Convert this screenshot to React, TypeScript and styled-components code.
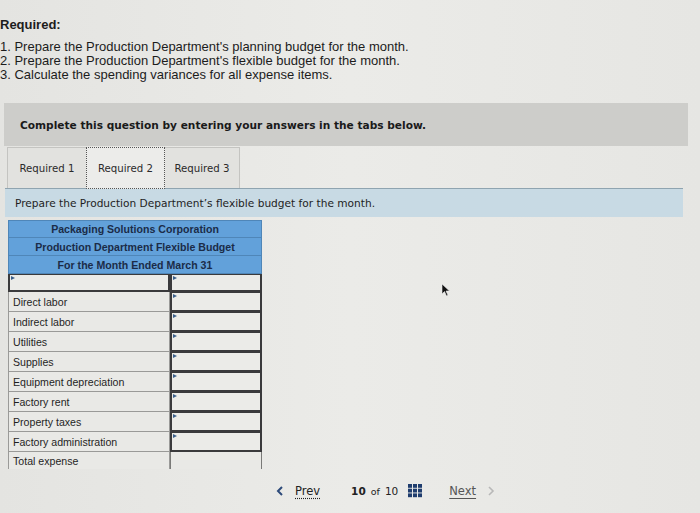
import * as React from 'react';
import styled, { createGlobalStyle } from 'styled-components';

const GlobalStyle = createGlobalStyle`
  html, body {
    margin: 0;
    padding: 0;
    background: #e7e7e4;
  }
  body {
    width: 700px;
    height: 513px;
    overflow: hidden;
    font-family: "Liberation Sans", Arial, sans-serif;
  }
`;

const Page = styled.div`
  position: relative;
  width: 700px;
  height: 513px;
  background: linear-gradient(90deg, #e4e4e1 0%, #ebebe8 50%, #e6e6e3 100%);
  padding-top: 18px;
  box-sizing: border-box;
`;

const Intro = styled.div`
  color: #1c1c1c;
  font-size: 13px;
  line-height: 14px;
`;

const IntroTitle = styled.div`
  font-weight: 700;
  margin-bottom: 8px;
`;

const Prompt = styled.div`
  margin: 21px 0 0 4px;
  width: 684px;
  height: 43px;
  background: #cdcdca;
  display: flex;
  align-items: center;
  padding-left: 16px;
  box-sizing: border-box;
  font-family: "DejaVu Sans", Verdana, sans-serif;
  font-weight: 700;
  font-size: 10.6px;
  color: #1a1a1a;
`;

const TabStrip = styled.div`
  display: flex;
  margin: 1px 0 0 7px;
  width: 233px;
  height: 41px;
  background: #e2e2df;
  border: 1px solid #c4c4c1;
  border-bottom: none;
  box-sizing: border-box;
`;

const Tab = styled.div<{ $active?: boolean; $w: number }>`
  flex: 0 0 ${p => p.$w}px;
  display: flex;
  align-items: center;
  justify-content: center;
  white-space: nowrap;
  height: ${p => (p.$active ? '42px' : '41px')};
  margin-top: ${p => (p.$active ? '-1px' : '0')};
  font-family: "DejaVu Sans", Verdana, sans-serif;
  font-size: 10.2px;
  color: #2a2a2a;
  background: ${p => (p.$active ? '#ececea' : 'transparent')};
  border: ${p => (p.$active ? '1px dotted #555' : '1px solid transparent')};
  box-sizing: border-box;
`;

const InfoBar = styled.div`
  margin-left: 5px;
  width: 678px;
  height: 29px;
  background: #c8dae4;
  border-top: 1px solid #8fa4b0;
  display: flex;
  align-items: center;
  padding-left: 10px;
  box-sizing: border-box;
  font-family: "DejaVu Sans", Verdana, sans-serif;
  font-size: 10.6px;
  color: #1e1e1e;
`;

const Table = styled.div`
  margin: 3px 0 0 8px;
  width: 254px;
`;

const HeadRow = styled.div`
  height: 18px;
  background: #62a1da;
  border: 1px solid #4f86b8;
  border-top: none;
  display: flex;
  align-items: center;
  justify-content: center;
  font-weight: 700;
  font-size: 10.6px;
  color: #1b2c48;
  box-sizing: border-box;
  &:first-child {
    border-top: 1px solid #4f86b8;
  }
`;

const Row = styled.div<{ $h?: number }>`
  display: grid;
  grid-template-columns: 162px 92px;
  height: ${p => p.$h ?? 20}px;
`;

const Label = styled.div<{ $open?: boolean }>`
  display: flex;
  align-items: center;
  padding-left: 4px;
  font-size: 10.6px;
  color: #1f1f1f;
  background: #e9e9e6;
  border: 1px solid #9a9a98;
  border-top: none;
  border-bottom: ${p => (p.$open ? 'none' : '1px solid #9a9a98')};
  box-sizing: border-box;
`;

const Input = styled.div`
  position: relative;
  background: #ebebe8;
  border: 2px solid #3a3a3c;
  border-top-width: 1px;
  box-sizing: border-box;
  &::before {
    content: '';
    position: absolute;
    left: 1px;
    top: 1px;
    border-left: 4px solid #3b5f8a;
    border-top: 2.5px solid transparent;
    border-bottom: 2.5px solid transparent;
  }
`;

const TotalCell = styled.div`
  background: #e9e9e6;
  border-left: 1px solid #7a7a78;
  border-right: 1px solid #7a7a78;
`;

const Nav = styled.div`
  display: flex;
  align-items: center;
  margin: 10px 0 0 276px;
  height: 24px;
  font-family: "DejaVu Sans", Verdana, sans-serif;
  font-size: 11.5px;
  color: #222;
`;

const NavLink = styled.span<{ $muted?: boolean }>`
  display: flex;
  align-items: center;
  gap: 11px;
  color: ${p => (p.$muted ? '#555' : '#222')};
  & u {
    text-decoration: ${p => (p.$muted ? 'underline' : 'underline dotted')};
    text-underline-offset: 3px;
  }
`;

const Count = styled.span`
  margin-left: 31px;
  font-size: 10.5px;
  & b {
    font-weight: 700;
  }
  & small {
    font-size: 9.5px;
    margin: 0 5px;
  }
`;

const GridIcon = styled.svg`
  margin: 0 26px 0 10px;
`;

const Cursor = styled.svg`
  position: absolute;
  left: 441px;
  top: 283px;
`;

const items = [
  'Direct labor',
  'Indirect labor',
  'Utilities',
  'Supplies',
  'Equipment depreciation',
  'Factory rent',
  'Property taxes',
  'Factory administration',
];

export default function App() {
  return (
    <Page>
      <GlobalStyle />
      <Intro>
        <IntroTitle>Required:</IntroTitle>
        <div>1. Prepare the Production Department's planning budget for the month.</div>
        <div>2. Prepare the Production Department's flexible budget for the month.</div>
        <div>3. Calculate the spending variances for all expense items.</div>
      </Intro>

      <Prompt>Complete this question by entering your answers in the tabs below.</Prompt>

      <TabStrip>
        <Tab $w={78}>Required 1</Tab>
        <Tab $w={79} $active>Required 2</Tab>
        <Tab $w={74}>Required 3</Tab>
      </TabStrip>

      <InfoBar>Prepare the Production Department’s flexible budget for the month.</InfoBar>

      <Table>
        <HeadRow>Packaging Solutions Corporation</HeadRow>
        <HeadRow>Production Department Flexible Budget</HeadRow>
        <HeadRow>For the Month Ended March 31</HeadRow>
        <Row $h={18}>
          <Input />
          <Input />
        </Row>
        {items.map(item => (
          <Row key={item}>
            <Label>{item}</Label>
            <Input />
          </Row>
        ))}
        <Row $h={17}>
          <Label $open>Total expense</Label>
          <TotalCell />
        </Row>
      </Table>

      <Nav>
        <NavLink>
          <svg width="8" height="10" viewBox="0 0 8 10">
            <path d="M6 1 L2 5 L6 9" fill="none" stroke="#2d4a7a" strokeWidth="2" />
          </svg>
          <u>Prev</u>
        </NavLink>
        <Count>
          <b>10</b><small>of</small>10
        </Count>
        <GridIcon width="15" height="14" viewBox="0 0 15 14">
          {[0, 1, 2].map(r =>
            [0, 1, 2].map(c => (
              <rect key={`${r}${c}`} x={c * 5} y={r * 4.7} width="4" height="3.8" fill="#1f3d6e" />
            ))
          )}
        </GridIcon>
        <NavLink $muted>
          <u>Next</u>
          <svg width="8" height="10" viewBox="0 0 8 10">
            <path d="M2 1 L6 5 L2 9" fill="none" stroke="#b8b8b8" strokeWidth="1.6" />
          </svg>
        </NavLink>
      </Nav>

      <Cursor width="10" height="14" viewBox="0 0 10 14">
        <path d="M1 1 L1 11 L3.5 8.5 L5.5 13 L7 12.3 L5 8 L8.5 8 Z" fill="#111" stroke="#eee" strokeWidth="0.6" />
      </Cursor>
    </Page>
  );
}
